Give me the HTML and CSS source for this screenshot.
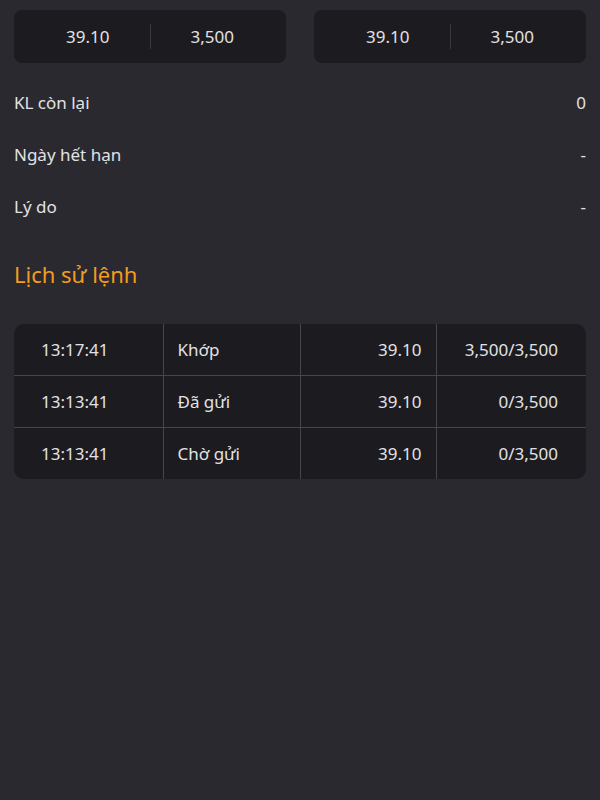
FILE: index.html
```html
<!DOCTYPE html>
<html lang="vi">
<head>
    <meta charset="UTF-8">
    <title>Chi tiết lệnh</title>
    <meta name="viewport" content="width=device-width, initial-scale=1.0">
    <link rel="stylesheet" href="styles.css">
</head>
<body>
    <div class="container">
        <div class="quotes">
            <div class="quote-card">
                <span class="quote-cell">39.10</span>
                <span class="quote-sep"></span>
                <span class="quote-cell">3,500</span>
            </div>
            <div class="quote-card">
                <span class="quote-cell">39.10</span>
                <span class="quote-sep"></span>
                <span class="quote-cell">3,500</span>
            </div>
        </div>

        <div class="info">
            <div class="info-row"><span>KL còn lại</span><span>0</span></div>
            <div class="info-row"><span>Ngày hết hạn</span><span>-</span></div>
            <div class="info-row"><span>Lý do</span><span>-</span></div>
        </div>

        <h2 class="section-title">Lịch sử lệnh</h2>

        <div class="history">
            <table>
                <colgroup>
                    <col class="c-time">
                    <col class="c-status">
                    <col class="c-price">
                    <col class="c-qty">
                </colgroup>
                <tbody>
                    <tr>
                        <td class="time">13:17:41</td>
                        <td class="status">Khớp</td>
                        <td class="num">39.10</td>
                        <td class="num qty">3,500/3,500</td>
                    </tr>
                    <tr>
                        <td class="time">13:13:41</td>
                        <td class="status">Đã gửi</td>
                        <td class="num">39.10</td>
                        <td class="num qty">0/3,500</td>
                    </tr>
                    <tr>
                        <td class="time">13:13:41</td>
                        <td class="status">Chờ gửi</td>
                        <td class="num">39.10</td>
                        <td class="num qty">0/3,500</td>
                    </tr>
                </tbody>
            </table>
        </div>
    </div>
</body>
</html>
```

FILE: styles.css
```css
body {
    font-family: 'Noto Sans', 'Open Sans', Arial, sans-serif;
    background: #2a2930;
    color: #e2e2e4;
    margin: 0;
    padding: 0;
}
.container {
    padding: 10px 14px;
}
.quotes {
    display: grid;
    grid-template-columns: 1fr 1fr;
    gap: 28px;
}
.quote-card {
    display: flex;
    align-items: center;
    height: 53px;
    background: #1c1b20;
    border-radius: 8px;
    font-size: 17px;
}
.quote-cell {
    flex: 1;
    text-align: center;
}
.quote-cell:first-child {
    padding-left: 12px;
}
.quote-cell:last-child {
    padding-right: 12px;
}
.quote-sep {
    width: 1px;
    height: 25px;
    background: #38373d;
}
.info {
    margin-top: 13px;
}
.info-row {
    display: flex;
    justify-content: space-between;
    align-items: center;
    height: 52px;
    font-size: 17px;
}
.section-title {
    margin: 24px 0 0 0;
    font-size: 22px;
    line-height: 36px;
    font-weight: normal;
    color: #f29d1f;
}
.history {
    margin-top: 32px;
    background: #1c1b20;
    border-radius: 10px;
    overflow: hidden;
}
table {
    width: 100%;
    border-collapse: collapse;
    table-layout: fixed;
}
.c-time { width: 149px; }
.c-status { width: 137px; }
.c-price { width: 136px; }
td {
    height: 51px;
    padding: 0 14px;
    font-size: 17px;
    border-left: 1px solid #47464c;
    border-top: 1px solid #47464c;
}
tr:first-child td {
    border-top: none;
}
td:first-child {
    border-left: none;
}
td.time {
    padding-left: 27px;
}
td.num {
    text-align: right;
}
td.qty {
    padding-right: 28px;
}
```
